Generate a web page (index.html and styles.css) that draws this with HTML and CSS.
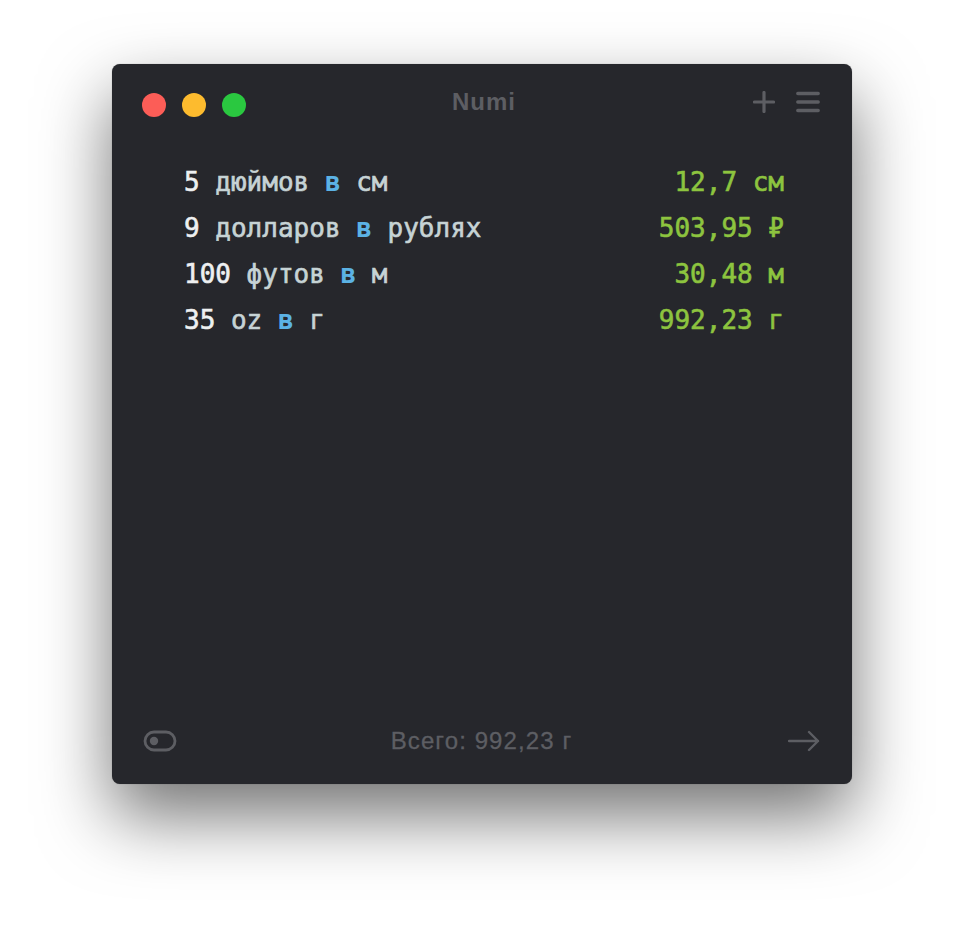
FILE: index.html
```html
<!DOCTYPE html>
<html lang="ru">
<head>
    <meta charset="UTF-8">
    <meta name="viewport" content="width=device-width, initial-scale=1.0">
    <title>Numi</title>
    <link rel="stylesheet" href="styles.css">
</head>
<body>
    <div class="window">
        <!-- Заголовок окна -->
        <div class="titlebar">
            <div class="lights">
                <span class="light red"></span>
                <span class="light yellow"></span>
                <span class="light green"></span>
            </div>
            <div class="title">Numi</div>
            <div class="tools">
                <svg width="22" height="22" viewBox="0 0 22 22">
                    <path d="M11 1.5 V20.5 M1.5 11 H20.5" stroke="#5d5e63" stroke-width="3.2" stroke-linecap="round" fill="none"/>
                </svg>
                <svg width="24" height="22" viewBox="0 0 24 22">
                    <path d="M1.8 2.5 H22.2 M1.8 11 H22.2 M1.8 19.5 H22.2" stroke="#5d5e63" stroke-width="3.4" stroke-linecap="round" fill="none"/>
                </svg>
            </div>
        </div>

        <!-- Строки вычислений -->
        <div class="sheet">
            <div class="row">
                <div class="expr"><span class="num">5</span> дюймов <span class="kw">в</span> см</div>
                <div class="result">12,7 см</div>
            </div>
            <div class="row">
                <div class="expr"><span class="num">9</span> долларов <span class="kw">в</span> рублях</div>
                <div class="result">503,95 ₽</div>
            </div>
            <div class="row">
                <div class="expr"><span class="num">100</span> футов <span class="kw">в</span> м</div>
                <div class="result">30,48 м</div>
            </div>
            <div class="row">
                <div class="expr"><span class="num">35</span> oz <span class="kw">в</span> г</div>
                <div class="result">992,23 г</div>
            </div>
        </div>

        <!-- Нижняя панель -->
        <div class="footer">
            <svg width="34" height="22" viewBox="0 0 34 22">
                <rect x="2" y="2" width="30" height="18" rx="9" stroke="#5d5e63" stroke-width="2.8" fill="none"/>
                <circle cx="11" cy="11" r="4.2" fill="#5d5e63"/>
            </svg>
            <div class="total">Всего: 992,23 г</div>
            <svg width="32" height="22" viewBox="0 0 32 22">
                <path d="M1 11 H30 M21 2 L30 11 L21 20" stroke="#5d5e63" stroke-width="2.4" stroke-linecap="round" stroke-linejoin="round" fill="none"/>
            </svg>
        </div>
    </div>
</body>
</html>
```

FILE: styles.css
```css
body {
    margin: 0;
    background: #fff;
    height: 944px;
    overflow: hidden;
}
.window {
    margin: 64px 0 0 112px;
    width: 740px;
    height: 720px;
    background: #26272c;
    border-radius: 8px;
    box-shadow: 0 32px 70px rgba(0, 0, 0, 0.55), 0 0 1px rgba(0, 0, 0, 0.4);
    display: flex;
    flex-direction: column;
    box-sizing: border-box;
    padding-bottom: 13px;
}
.titlebar {
    height: 80px;
    display: grid;
    grid-template-columns: 1fr auto 1fr;
    align-items: center;
    padding: 0 32px 0 30px;
}
.lights {
    display: flex;
    gap: 16px;
    margin-top: 1px;
}
.light {
    width: 24px;
    height: 24px;
    border-radius: 50%;
}
.red { background: #fc5d57; }
.yellow { background: #fdbb2e; }
.green { background: #2ac840; }
.title {
    font-family: "Liberation Sans", Arial, sans-serif;
    font-weight: bold;
    font-size: 24px;
    color: #5d5e63;
    letter-spacing: 1px;
    margin: -5px 0 0 6px;
}
.tools {
    display: flex;
    justify-content: flex-end;
    align-items: center;
    gap: 21px;
    margin-top: -5px;
}
.sheet {
    flex: 1;
    padding: 15px 68px 0 72px;
    font-family: "DejaVu Sans Mono", "Liberation Mono", monospace;
    font-size: 26px;
    line-height: 46px;
    -webkit-text-stroke: 0.6px currentColor;
}
.row {
    display: flex;
    justify-content: space-between;
    white-space: pre;
}
.expr {
    color: #c6d3d5;
}
.num {
    color: #eef0f1;
}
.kw {
    color: #5bb2e4;
    font-weight: bold;
    -webkit-text-stroke: 0;
}
.result {
    color: #8dc43f;
}
.footer {
    height: 60px;
    display: flex;
    align-items: center;
    justify-content: space-between;
    padding: 0 32px 0 31px;
}
.total {
    font-family: "Liberation Sans", Arial, sans-serif;
    font-size: 24px;
    color: #5d5e63;
    letter-spacing: 1.1px;
    -webkit-text-stroke: 0.3px currentColor;
    margin-right: 2px;
}
```
